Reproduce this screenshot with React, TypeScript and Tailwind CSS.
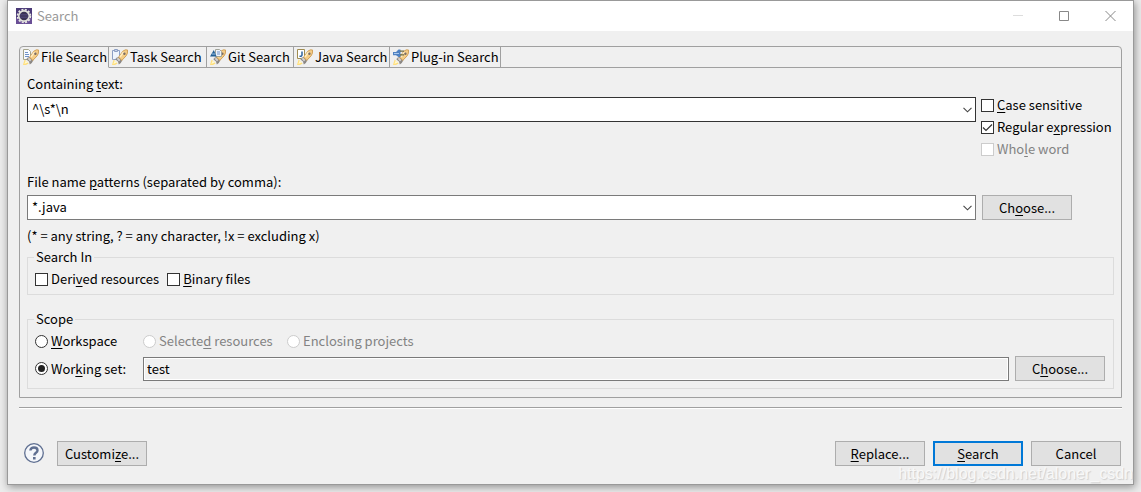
import React, { useState } from 'react';

type TabId = 'file' | 'task' | 'git' | 'java' | 'plugin';

const TABS: { id: TabId; label: string; width: string }[] = [
  { id: 'file', label: 'File Search', width: 'w-[89px]' },
  { id: 'task', label: 'Task Search', width: 'w-[98px]' },
  { id: 'git', label: 'Git Search', width: 'w-[87px]' },
  { id: 'java', label: 'Java Search', width: 'w-[96px]' },
  { id: 'plugin', label: 'Plug-in Search', width: 'w-[111px]' },
];

const EclipseIcon: React.FC = () => (
  <svg width="16" height="16" viewBox="0 0 16 16" aria-hidden="true">
    <rect width="16" height="16" fill="#4b3a78" />
    <rect y="10" width="16" height="6" fill="#6a4f96" />
    <circle cx="8" cy="8" r="6.4" fill="none" stroke="#e8e8e4" strokeWidth="1.8" strokeDasharray="2 1.35" />
    <circle cx="8" cy="8" r="5.2" fill="#3a3354" stroke="#e2e2dc" strokeWidth="1.7" />
    <path d="M4 6.5h8M3.5 8h9M4 9.5h8" stroke="#4f4878" strokeWidth=".8" />
  </svg>
);

// Flashlight that every search tab shares
const Torch: React.FC = () => (
  <>
    <path d="M0 16 1.6 10.5 5.6 14.4 3 16z" fill="#ffdf7c" />
    <path d="M1.3 15 2.8 11.6 4.8 13.6z" fill="#fff8d2" />
    <path d="M4 9 7.2 7.8 10.4 11.2 8.8 14 6.8 15.5 6 12.5 3.5 10.5z" fill="#8b8784" />
    <path d="M4.4 9.6 6.6 9 8.4 11 7 12.4z" fill="#d5d2ce" />
    <path d="M6.6 8.2 10.8 2.2 13.4.8 15.6 1 15.4 4.2 14.2 6.8 9.8 11.4z" fill="#f5cd86" stroke="#cd9a50" strokeWidth=".9" />
    <path d="M8 8 11.6 3" stroke="#ffedc2" strokeWidth="1.5" />
    <circle cx="12.4" cy="4.8" r="1.2" fill="#7a6c66" />
  </>
);

const TabIcon: React.FC<{ id: TabId }> = ({ id }) => (
  <svg width="16" height="16" viewBox="0 0 16 16" className="shrink-0" aria-hidden="true">
    {id === 'file' && (
      <>
        <path d="M.5.5h5l2 2v8h-7z" fill="#f8fbff" stroke="#a5a48c" />
        <path d="M2 3.5h3M2 5.5h4M2 7.5h4" stroke="#6f91c8" />
      </>
    )}
    {id === 'task' && (
      <>
        <path d="M.5 1.5h7v9h-7z" fill="#eef4fd" stroke="#8c9fc4" />
        <path d="M2.5.5h3v2h-3z" fill="#c8d3e8" stroke="#8c9fc4" />
      </>
    )}
    {id === 'java' && (
      <>
        <path d="M.5.5h7v9h-7z" fill="#fff" stroke="#a08c50" />
        <path d="M5 2.5v3.6c0 1-.8 1.4-2.5 1.2" fill="none" stroke="#2c62a0" strokeWidth="1.5" />
      </>
    )}
    <Torch />
    {id === 'git' && (
      <>
        <path d="M5.5.5h4l2 2v5h-6z" fill="#eef4fc" stroke="#a2a59b" />
        <path d="M7 3h3M7 5h3" stroke="#6f91c8" />
        <path d="M0 7.5 3.8 1 6.6 7.5z" fill="#235f95" />
        <path d="M2 5h3.5" stroke="#9dc3e6" />
      </>
    )}
    {id === 'plugin' && (
      <>
        <path d="M0 3h3L5.5.5h2v7.5h-2L3 6.2H0z" fill="#4f82c2" />
        <path d="M7 2.2h4M7 5.8h4" stroke="#6c6a40" strokeWidth="1.3" />
        <path d="M1 4.5h5" stroke="#a9c8ee" />
      </>
    )}
  </svg>
);

interface PushButtonProps {
  children: React.ReactNode;
  isDefault?: boolean;
}

const PushButton: React.FC<PushButtonProps> = ({ children, isDefault }) => (
  <button
    type="button"
    className={`h-[25px] w-[90px] shrink-0 bg-[#e1e1e1] text-center ${isDefault ? 'border-2 border-[#0078d7]' : 'border border-[#adadad]'}`}
  >
    {children}
  </button>
);

interface OptionProps {
  children: React.ReactNode;
  defaultChecked?: boolean;
  disabled?: boolean;
}

const CheckBox: React.FC<OptionProps> = ({ children, defaultChecked, disabled }) => (
  <label className={`flex h-4 items-center gap-[3px] ${disabled ? 'text-[#838383]' : ''}`}>
    <span className="grid shrink-0">
      <input
        type="checkbox"
        defaultChecked={defaultChecked}
        disabled={disabled}
        className="peer col-start-1 row-start-1 size-[13px] appearance-none border border-[#333] bg-white disabled:border-[#ccc]"
      />
      <svg width="13" height="13" viewBox="0 0 13 13" className="pointer-events-none invisible col-start-1 row-start-1 peer-checked:visible">
        <path d="M2 6.5 5 9.5 11 3.5" fill="none" stroke="#333" strokeWidth="1.2" />
      </svg>
    </span>
    <span>{children}</span>
  </label>
);

const Radio: React.FC<OptionProps> = ({ children, defaultChecked, disabled }) => (
  <label className={`flex h-4 items-center gap-[3px] ${disabled ? 'text-[#838383]' : ''}`}>
    <span className="grid shrink-0 place-items-center">
      <input
        type="radio"
        name="scope"
        defaultChecked={defaultChecked}
        disabled={disabled}
        className="peer col-start-1 row-start-1 size-[13px] appearance-none rounded-full border border-[#333] bg-white disabled:border-[#ccc]"
      />
      <span className="pointer-events-none invisible col-start-1 row-start-1 size-[7px] rounded-full bg-[#222] peer-checked:visible" />
    </span>
    <span>{children}</span>
  </label>
);

const Combo: React.FC<{ id: string; value: string; border: string }> = ({ id, value, border }) => (
  <div className="grid flex-1 items-center">
    <select id={id} defaultValue={value} className={`col-start-1 row-start-1 h-[25px] w-full appearance-none border bg-white px-1 pb-0.5 ${border}`}>
      <option>{value}</option>
    </select>
    <svg width="9" height="6" viewBox="0 0 9 6" className="pointer-events-none col-start-1 row-start-1 mr-1 justify-self-end">
      <path d="M.5.8 4.5 4.8 8.5.8" fill="none" stroke="#444" strokeWidth="1.1" />
    </svg>
  </div>
);

export default function App() {
  const [activeTab, setActiveTab] = useState<TabId>('file');

  return (
    <div className="relative overflow-hidden bg-[#ececec] px-[7px] pb-[7px] font-['Noto_Sans_CJK_SC',sans-serif] text-[13px] leading-4 text-black [&_u]:underline-offset-2">
      <div className="border border-[#999] bg-[#f0f0f0] shadow-[1px_2px_8px_rgba(0,0,0,0.4)]">
        <header className="flex h-[30px] items-center bg-white pl-2 text-[#999]">
          <EclipseIcon />
          <h1 className="ml-[5px] flex-1">Search</h1>
          <button type="button" aria-label="Minimize" className="flex h-full w-[46px] items-center justify-center">
            <svg width="11" height="11" viewBox="0 0 11 11"><path d="M0 4.5h10" stroke="#ddd" /></svg>
          </button>
          <button type="button" aria-label="Maximize" className="flex h-full w-[46px] items-center justify-center">
            <svg width="11" height="11" viewBox="0 0 11 11"><path d="M.5.5h9v9h-9z" fill="none" stroke="#888" /></svg>
          </button>
          <button type="button" aria-label="Close" className="flex h-full w-[46px] items-center justify-center">
            <svg width="11" height="11" viewBox="0 0 11 11"><path d="m.5 0 10 10m0-10-10 10" stroke="#888" /></svg>
          </button>
        </header>

        <main className="px-[11px] pt-[15px] pb-[18px]">
          <div className="rounded-t-[4px] border border-[#a0a0a0]">
            <div role="tablist" className="flex h-[21px]">
              {TABS.map(tab => (
                <button
                  key={tab.id}
                  type="button"
                  role="tab"
                  aria-selected={tab.id === activeTab}
                  onClick={() => setActiveTab(tab.id)}
                  className={`flex items-center gap-0.5 border-r border-b border-r-[#a0a0a0] pl-[3px] whitespace-nowrap ${tab.width} ${tab.id === activeTab ? 'border-b-transparent' : 'border-b-[#a0a0a0]'}`}
                >
                  <TabIcon id={tab.id} />
                  {tab.label}
                </button>
              ))}
              <div className="flex-1 border-b border-[#a0a0a0]" />
            </div>

            <div role="tabpanel" className="px-[7px] pt-2 pb-2">
              <label htmlFor="containing" className="block">Containing <u>t</u>ext:</label>
              <div className="mt-[3px] flex gap-[5px]">
                <div className="flex flex-1 items-start pt-0.5">
                  <Combo id="containing" value="^\s*\n" border="border-[#333]" />
                </div>
                <div className="flex w-[133px] flex-col gap-1.5 pt-0.5 pb-1">
                  <CheckBox><u>C</u>ase sensitive</CheckBox>
                  <CheckBox defaultChecked>Regular e<u>x</u>pression</CheckBox>
                  <CheckBox disabled>Who<u>l</u>e word</CheckBox>
                </div>
              </div>

              <label htmlFor="patterns" className="mt-[13px] block">File name <u>p</u>atterns (separated by comma):</label>
              <div className="mt-[5px] flex gap-1.5">
                <Combo id="patterns" value="*.java" border="border-[#7a7a7a]" />
                <div className="w-[132px]">
                  <PushButton>Ch<u>o</u>ose...</PushButton>
                </div>
              </div>
              <p className="mt-2">(* = any string, ? = any character, !x = excluding x)</p>

              <fieldset className="mt-[5px] border border-[#dcdcdc] px-[7px] pb-[7px]">
                <legend className="-ml-px px-0.5">Search In</legend>
                <div className="flex gap-2 pt-1.5">
                  <CheckBox>Deri<u>v</u>ed resources</CheckBox>
                  <CheckBox><u>B</u>inary files</CheckBox>
                </div>
              </fieldset>

              <fieldset className="mt-4 border border-[#dcdcdc] px-[7px] pb-[7px]">
                <legend className="-ml-px px-0.5">Scope</legend>
                <div className="flex pt-1.5">
                  <div className="w-[108px]"><Radio><u>W</u>orkspace</Radio></div>
                  <div className="w-[144px]"><Radio disabled>Selecte<u>d</u> resources</Radio></div>
                  <Radio disabled>Enclosing projects</Radio>
                </div>
                <div className="mt-[7px] flex items-center pr-px">
                  <div className="w-[108px]"><Radio defaultChecked>Wor<u>k</u>ing set:</Radio></div>
                  <input
                    type="text"
                    aria-label="Working set"
                    readOnly
                    value="test"
                    className="mr-1.5 h-6 min-w-0 flex-1 border border-[#7a7a7a] bg-[#f0f0f0] px-[3px] shadow-[inset_0_0_0_1px_#fff]"
                  />
                  <PushButton>C<u>h</u>oose...</PushButton>
                </div>
              </fieldset>
            </div>
          </div>

          <hr className="mt-[9px] h-0.5 border-t border-b border-t-[#a0a0a0] border-b-white" />

          <footer className="mt-8 flex items-center gap-2 pr-px pl-1">
            <button type="button" aria-label="Help" className="mr-1">
              <svg width="22" height="22" viewBox="0 0 22 22">
                <circle cx="11" cy="10" r="9.3" fill="#f4f6fa" stroke="#5f6f91" strokeWidth="1.3" />
                <path d="M7.4 7.6c0-2.2 1.6-3.1 3.6-3.1s3.5 1.1 3.5 2.9c0 2.4-3.2 2.4-3.2 5" fill="none" stroke="#5f6f91" strokeWidth="2.4" />
                <path d="M10 14h2.6v2.5H10z" fill="#5f6f91" />
              </svg>
            </button>
            <PushButton>Customi<u>z</u>e...</PushButton>
            <div className="flex-1" />
            <PushButton><u>R</u>eplace...</PushButton>
            <PushButton isDefault><u>S</u>earch</PushButton>
            <PushButton>Cancel</PushButton>
          </footer>
        </main>
      </div>
      <span className="pointer-events-none absolute right-2 bottom-2 font-['Liberation_Sans',sans-serif] text-base leading-5 text-[#f8f8f8] [text-shadow:1px_1px_1px_#ccc]">
        https://blog.csdn.net/aloner_csdn
      </span>
    </div>
  );
}
